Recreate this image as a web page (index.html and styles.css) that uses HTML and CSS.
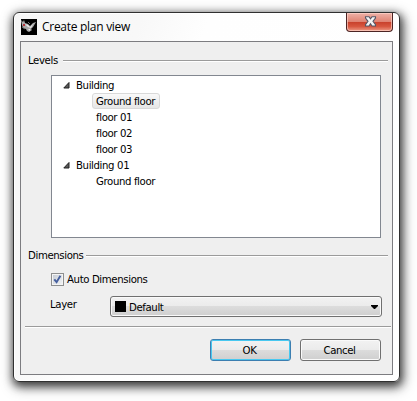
FILE: index.html
```html
<!DOCTYPE html>
<html lang="en">
<head>
<meta charset="utf-8">
<title>Create plan view</title>
<link rel="stylesheet" href="styles.css">
</head>
<body>
<section class="window">
  <header class="titlebar">
    <svg class="app-icon" width="16" height="16" viewBox="0 0 16 16">
      <rect width="16" height="16" fill="#000"/>
      <path d="M0 1L2 3L3 1L4 4L7 5L9 7L12 4L15 3L12 8L10 10L11 11L8 13L6 12L5 10L2 9L1 6Z" fill="#aaa"/>
      <path d="M4 5L7 6L9 8L12 5L10 9L7 8ZM7 10L9 10L9 12Z" fill="#eee"/>
      <path d="M1 8L4 10M7 3L9 5" stroke="#707070" fill="none"/>
      <path d="M2 5h2v2H2z" fill="#b8323a"/>
    </svg>
    <h1 class="title">Create plan view</h1>
    <button class="close" aria-label="Close">
      <svg width="13" height="11" viewBox="0 0 13 11">
        <path d="M1.5 .7H5L6.5 2.8L8 .7H11.5V2L9 5.3L11.5 8.6V10H8L6.5 7.8L5 10H1.5V8.6L4 5.3L1.5 2Z" fill="#f4f4f4" stroke="#535666" stroke-width="1.1"/>
      </svg>
    </button>
  </header>
  <main class="panel">
    <div class="group levels"><span class="label">Levels</span><i class="rule"></i></div>
    <div class="tree">
      <div class="row parent"><svg class="arrow" width="7" height="7"><path d="M6 .5V6H.8Z" fill="#595959" stroke="#222"/></svg><span class="name">Building</span></div>
      <div class="row"><span class="selected">Ground floor</span></div>
      <div class="row">floor 01</div>
      <div class="row">floor 02</div>
      <div class="row">floor 03</div>
      <div class="row parent"><svg class="arrow" width="7" height="7"><path d="M6 .5V6H.8Z" fill="#595959" stroke="#222"/></svg><span class="name">Building 01</span></div>
      <div class="row">Ground floor</div>
    </div>
    <div class="group dims"><span class="label">Dimensions</span><i class="rule"></i></div>
    <div class="check">
      <span class="box"><svg width="9" height="9" viewBox="0 0 9 9"><path d="M1.3 4.3L3.6 7.2L7.4 .8" fill="none" stroke="#455f9e" stroke-width="1.9"/></svg></span>
      <span class="name">Auto Dimensions</span>
    </div>
    <div class="layer">
      <span class="layer-label">Layer</span>
      <div class="combo"><i class="swatch"></i><span class="name">Default</span><svg class="drop" width="7" height="4"><path d="M0 0H7V1L4 4H3L0 1Z" fill="#000"/></svg></div>
    </div>
    <i class="rule footer-rule"></i>
    <div class="buttons"><button class="btn ok">OK</button><button class="btn">Cancel</button></div>
  </main>
</section>
</body>
</html>
```
FILE: styles.css
```css
* { box-sizing: border-box; }
body {
  margin: 0;
  padding: 12px 17px 19px 13px;
  height: 401px;
  overflow: hidden;
  background: #fff;
  color: #000;
  font: 11.3px/18px "DejaVu Sans Condensed", "DejaVu Sans", sans-serif;
  letter-spacing: -.38px;
}
.window {
  width: 387px;
  height: 370px;
  padding: 0 6px 6px;
  border: 1px solid #303030;
  border-radius: 6px;
  background: linear-gradient(110deg, #f6f6f6 0, #f8f8f8 25%, #fefefe 38%, #fff 100%);
  box-shadow: 1px 3px 8px 1px rgba(0,0,0,.65), 2px 4px 13px 2px rgba(0,0,0,.35), inset 0 0 0 1px #fff;
}
.titlebar { display: flex; height: 28px; padding-left: 1px; }
.app-icon { margin-top: 6px; }
.title {
  margin: 5px 0 0 5px;
  font: 12px/18px "Open Sans", sans-serif;
  letter-spacing: -.28px;
  white-space: nowrap;
}
.close {
  display: flex;
  align-items: center;
  justify-content: center;
  width: 47px;
  height: 19px;
  margin-left: auto;
  padding: 0 0 1px 2px;
  border: 1px solid #4c2424;
  border-top: 0;
  border-radius: 0 0 4px 4px;
  background: linear-gradient(#eeb2a8 0, #df8373 48%, #c8402b 50%, #d75740 75%, #ed9b86 100%);
  box-shadow: inset 0 0 0 1px rgba(255,215,205,.65);
}
.panel {
  height: 334px;
  padding: 10px 3px 0 4px;
  border: 1px solid #7c7c80;
  background: #efefef;
}
.group { display: flex; align-items: flex-start; height: 16px; padding: 0 1px 0 3px; }
.rule { display: block; height: 2px; background: #9b9b9b; border-bottom: 1px solid #fff; }
.group .rule { flex: 1; margin-top: 8px; }
.levels .label { width: 35px; }
.dims .label { width: 58px; }
.tree {
  width: 330px;
  height: 163px;
  margin: 7px 0 0 26px;
  padding: 1px 0 0 10px;
  border: 1px solid #828790;
  background: #fff;
}
.row { display: flex; height: 16px; padding-left: 34px; }
.parent { align-items: center; padding-left: 1px; }
.name { padding-top: 2px; }
.arrow { margin-right: 6px; }
.selected {
  height: 16px;
  margin-left: -4px;
  padding: 0 4px 0 3px;
  border: 1px solid #d9d9d9;
  border-radius: 3px;
  background: linear-gradient(#f9f9f9, #e6e6e6);
  line-height: 16px;
}
.dims { margin-top: 9px; }
.check { display: flex; align-items: center; height: 16px; margin: 8px 0 0 26px; }
.box {
  display: flex;
  align-items: center;
  justify-content: center;
  width: 13px;
  height: 13px;
  margin-right: 3px;
  border: 1px solid #8e8f8f;
  background: linear-gradient(135deg, #c3c9d2, #f5f6f7);
  box-shadow: inset 0 0 0 1px #f4f4f4;
}
.layer { display: flex; height: 22px; margin: 9px 0 0 25px; }
.layer-label { width: 60px; }
.combo {
  display: flex;
  align-items: center;
  width: 272px;
  height: 21px;
  padding: 0 3px 0 4px;
  border: 1px solid #707070;
  border-radius: 3px;
  background: linear-gradient(#f2f2f2 0, #ebebeb 49%, #dcdcdc 50%, #cfcfcf 100%);
  box-shadow: inset 0 0 0 1px #fafafa;
}
.swatch { width: 11px; height: 11px; margin-right: 3px; background: #000; }
.drop { margin-left: auto; }
.footer-rule { margin: 8px -2px 0 0; }
.buttons { display: flex; justify-content: flex-end; gap: 9px; margin: 11px 8px 0 0; }
.btn {
  width: 81px;
  height: 22px;
  padding: 1px 2px 0 0;
  border: 1px solid #707070;
  border-radius: 3px;
  background: linear-gradient(#f2f2f2 0, #ebebeb 49%, #dcdcdc 50%, #cfcfcf 100%);
  box-shadow: inset 0 0 0 1px #fafafa;
  color: #000;
  font: inherit;
  letter-spacing: inherit;
}
.ok { border-color: #3c7fb1; box-shadow: inset 0 0 0 1px #48c8f0; }
```
